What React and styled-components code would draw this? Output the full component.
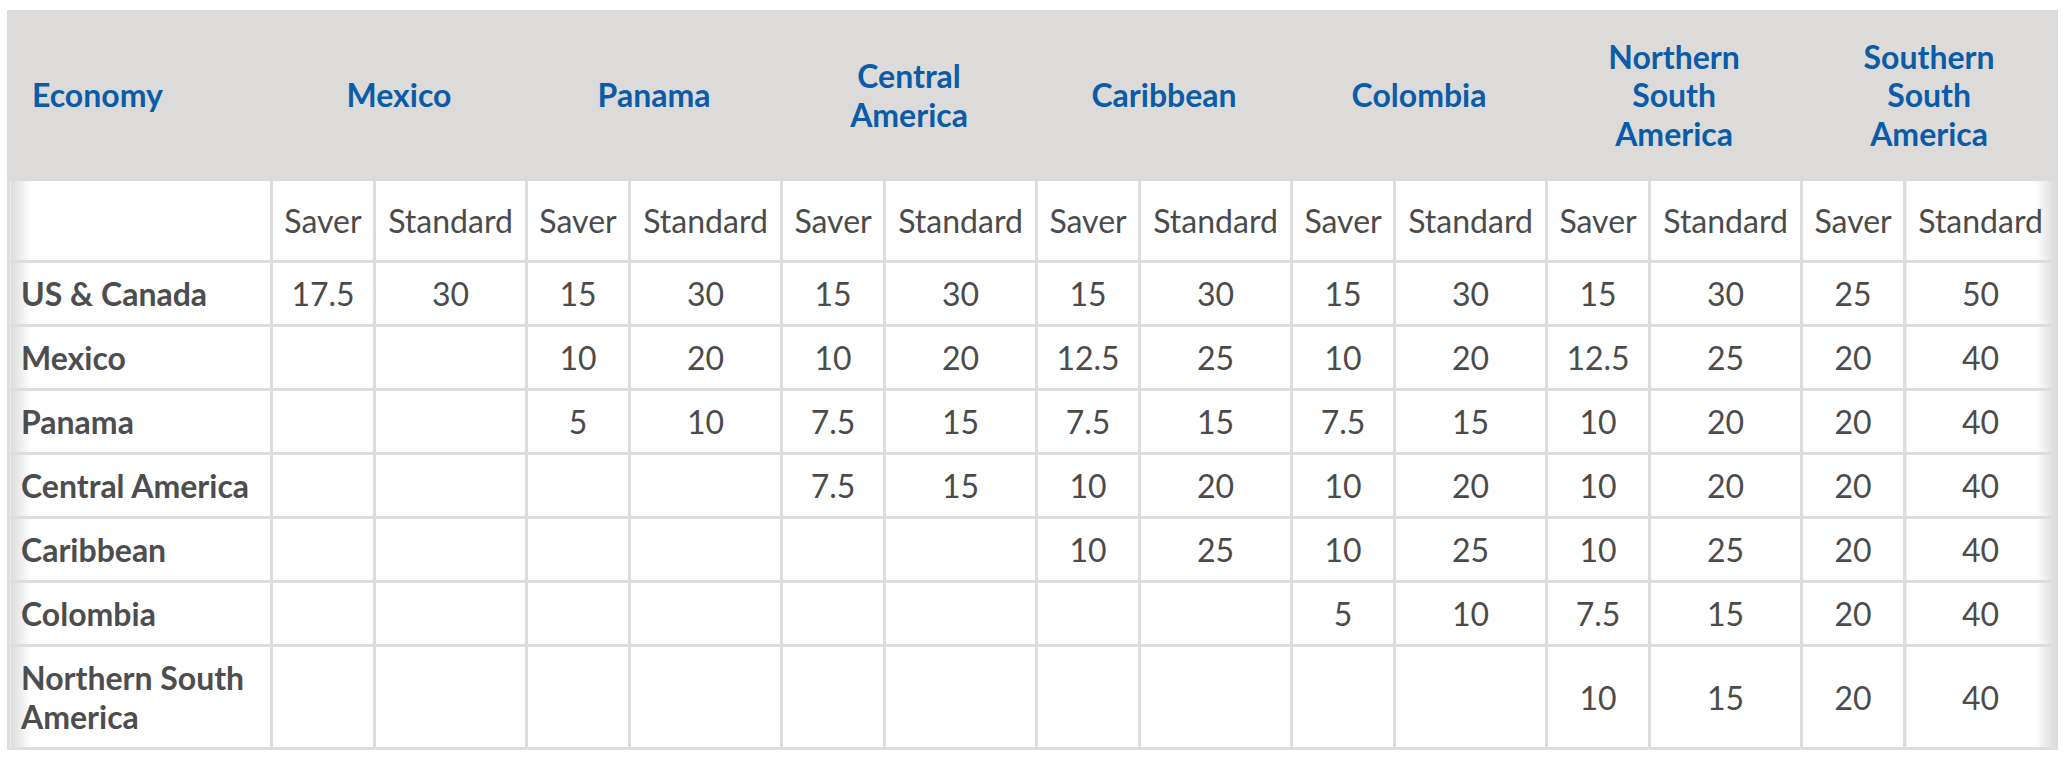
import React from "react";
import styled, { createGlobalStyle } from "styled-components";

const GlobalStyle = createGlobalStyle`
  body {
    margin: 0;
    background: #ffffff;
    font-family: Lato, "Open Sans", sans-serif;
  }
`;

const regions = [
  "Mexico",
  "Panama",
  ["Central", "America"],
  "Caribbean",
  "Colombia",
  ["Northern", "South", "America"],
  ["Southern", "South", "America"],
];

const rows = [
  { name: "US & Canada", values: ["17.5", "30", "15", "30", "15", "30", "15", "30", "15", "30", "15", "30", "25", "50"] },
  { name: "Mexico", values: ["", "", "10", "20", "10", "20", "12.5", "25", "10", "20", "12.5", "25", "20", "40"] },
  { name: "Panama", values: ["", "", "5", "10", "7.5", "15", "7.5", "15", "7.5", "15", "10", "20", "20", "40"] },
  { name: "Central America", values: ["", "", "", "", "7.5", "15", "10", "20", "10", "20", "10", "20", "20", "40"] },
  { name: "Caribbean", values: ["", "", "", "", "", "", "10", "25", "10", "25", "10", "25", "20", "40"] },
  { name: "Colombia", values: ["", "", "", "", "", "", "", "", "5", "10", "7.5", "15", "20", "40"] },
  { name: ["Northern South", "America"], values: ["", "", "", "", "", "", "", "", "", "", "10", "15", "20", "40"] },
];

const lines = (text) =>
  Array.isArray(text)
    ? text.map((t, i) => (
        <React.Fragment key={i}>
          {i > 0 && <br />}
          {t}
        </React.Fragment>
      ))
    : text;

const App = () => {
  return (
    <Page>
      <GlobalStyle />
      <Table>
        <colgroup>
          <col style={{ width: 263 }} />
          {regions.map((_, i) => (
            <React.Fragment key={i}>
              <col style={{ width: 103 }} />
              <col style={{ width: 152 }} />
            </React.Fragment>
          ))}
        </colgroup>
        <thead>
          <tr>
            <HeadCell $left>Economy</HeadCell>
            {regions.map((r, i) => (
              <HeadCell key={i} colSpan={2}>
                {lines(r)}
              </HeadCell>
            ))}
          </tr>
        </thead>
        <tbody>
          <tr>
            <SubCell $shadow="left" />
            {regions.map((_, i) => (
              <React.Fragment key={i}>
                <SubCell>Saver</SubCell>
                <SubCell $shadow={i === regions.length - 1 ? "right" : undefined}>
                  Standard
                </SubCell>
              </React.Fragment>
            ))}
          </tr>
          {rows.map((row, r) => (
            <tr key={r}>
              <RowLabel>{lines(row.name)}</RowLabel>
              {row.values.map((v, i) => (
                <ValueCell key={i} $shadow={i === row.values.length - 1 ? "right" : undefined}>
                  {v}
                </ValueCell>
              ))}
            </tr>
          ))}
        </tbody>
      </Table>
    </Page>
  );
};

const leftShadow = `linear-gradient(to right, rgba(0, 0, 0, 0.14), rgba(0, 0, 0, 0) 20px)`;
const rightShadow = `linear-gradient(to left, rgba(0, 0, 0, 0.14), rgba(0, 0, 0, 0) 20px)`;

const Page = styled.div`
  padding: 10px 8px 14px 7px;
`;

const Table = styled.table`
  width: 2048px;
  table-layout: fixed;
  border-collapse: collapse;
  border: 3px solid #dddddd;
  font-size: 32px;
  color: #4b4b4b;
`;

const HeadCell = styled.th`
  background: #dcdbda;
  color: #0a5ca8;
  font-weight: 700;
  line-height: 38.4px;
  padding: 25px ${(p) => (p.$left ? "22px" : "10px")};
  text-align: ${(p) => (p.$left ? "left" : "center")};
  vertical-align: middle;
  border: 3px solid #dcdbda;
`;

const Cell = styled.td`
  border: 3px solid #dddddd;
  line-height: 39px;
  vertical-align: middle;
  background-image: ${(p) =>
    p.$shadow === "left" ? leftShadow : p.$shadow === "right" ? rightShadow : "none"};
`;

const SubCell = styled(Cell)`
  padding: 20px 0;
  text-align: center;
  font-weight: 400;
  white-space: nowrap;
`;

const RowLabel = styled(Cell)`
  padding: 11px 11px;
  text-align: left;
  font-weight: 700;
  color: #4d4d4f;
  background-image: ${leftShadow};
`;

const ValueCell = styled(Cell)`
  padding: 11px 0;
  text-align: center;
`;

export default App;
